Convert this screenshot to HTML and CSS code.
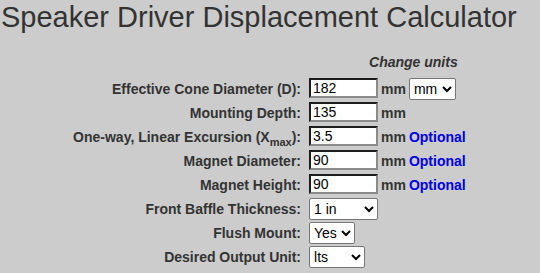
FILE: index.html
```html
<!DOCTYPE html>
<html lang="en">
<head>
    <meta charset="UTF-8">
    <title>Speaker Driver Displacement Calculator</title>
    <link rel="stylesheet" href="styles.css">
</head>
<body>
    <h1 class="title">Speaker Driver Displacement Calculator</h1>

    <div class="calc">
        <div class="head">Change units</div>

        <label class="lbl" for="cone">Effective Cone Diameter (D):</label>
        <input class="num" id="cone" type="text" value="182">
        <span class="unit">mm</span>
        <select class="sel sel-unit">
            <option>mm</option>
            <option>cm</option>
            <option>in</option>
        </select>

        <label class="lbl" for="depth">Mounting Depth:</label>
        <input class="num" id="depth" type="text" value="135">
        <span class="unit">mm</span>
        <span></span>

        <label class="lbl" for="xmax">One-way, Linear Excursion (X<sub>max</sub>):</label>
        <input class="num" id="xmax" type="text" value="3.5">
        <span class="unit">mm</span>
        <span class="opt">Optional</span>

        <label class="lbl" for="magd">Magnet Diameter:</label>
        <input class="num" id="magd" type="text" value="90">
        <span class="unit">mm</span>
        <span class="opt">Optional</span>

        <label class="lbl" for="magh">Magnet Height:</label>
        <input class="num" id="magh" type="text" value="90">
        <span class="unit">mm</span>
        <span class="opt">Optional</span>

        <label class="lbl" for="baffle">Front Baffle Thickness:</label>
        <div class="wide">
            <select class="sel sel-baffle" id="baffle">
                <option>1 in</option>
                <option>0.5 in</option>
                <option>0.75 in</option>
            </select>
        </div>

        <label class="lbl" for="flush">Flush Mount:</label>
        <div class="wide">
            <select class="sel sel-flush" id="flush">
                <option>Yes</option>
                <option>No</option>
            </select>
        </div>

        <label class="lbl" for="out">Desired Output Unit:</label>
        <div class="wide">
            <select class="sel sel-out" id="out">
                <option>lts</option>
                <option>cu ft</option>
                <option>cu in</option>
            </select>
        </div>
    </div>
</body>
</html>
```

FILE: styles.css
```css
body {
    margin: 0;
    background: #cccccc;
    color: #333333;
    font-family: "Liberation Sans", Arial, sans-serif;
}

.title {
    margin: 0;
    padding-left: 1px;
    font-size: 29px;
    font-weight: normal;
    line-height: 34px;
    color: #333333;
}

/* form grid: label | input | unit | extra */
.calc {
    display: grid;
    grid-template-columns: auto 69px auto 58px;
    grid-auto-rows: 22px;
    column-gap: 3px;
    row-gap: 2px;
    justify-content: center;
    align-items: center;
    margin-top: 20px;
    font-size: 14px;
    font-weight: bold;
}

.head {
    grid-column: 2 / 5;
    padding-left: 60px;
    font-style: italic;
    align-self: start;
    line-height: 16px;
}

.lbl {
    grid-column: 1;
    text-align: right;
    padding-right: 5px;
    white-space: nowrap;
}

.lbl sub {
    font-size: 11px;
    line-height: 0;
}

.num {
    box-sizing: border-box;
    width: 69px;
    height: 20px;
    margin: 0;
    padding: 0 2px;
    border: 2px solid;
    border-color: #1c1c1c #8a8a8a #8a8a8a #1c1c1c;
    background: #ffffff;
    color: #000000;
    font-family: "Liberation Sans", Arial, sans-serif;
    font-size: 14px;
    align-self: start;
}

.unit {
    white-space: nowrap;
}

.opt {
    color: #0000ee;
    white-space: nowrap;
}

.wide {
    grid-column: 2 / 5;
    display: flex;
}

.sel {
    box-sizing: border-box;
    height: 22px;
    margin: 0;
    border: 1px solid #767676;
    border-radius: 2px;
    background: #ffffff;
    color: #000000;
    font-family: "Liberation Sans", Arial, sans-serif;
    font-size: 14px;
}

.sel-unit {
    width: 47px;
}

.sel-baffle {
    width: 69px;
}

.sel-flush {
    width: 46px;
}

.sel-out {
    width: 56px;
}
```
